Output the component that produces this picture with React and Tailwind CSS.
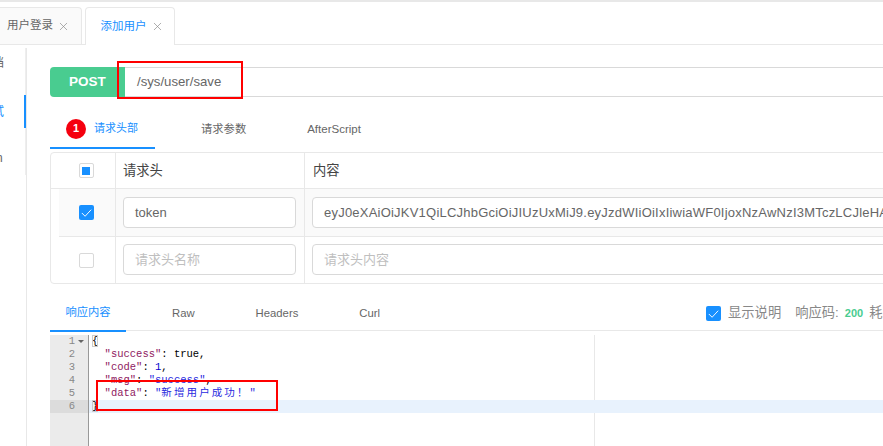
import { X } from "lucide-react";

const font = { fontFamily: '"Liberation Sans", "Noto Sans CJK SC", sans-serif' };

const Check = () => (
  <svg viewBox="0 0 16 16" className="h-[15px] w-[15px]" fill="none" stroke="#fff" strokeWidth="1">
    <path d="M3 8.5 L6.5 12 L13 5" />
  </svg>
);

function CheckedBox() {
  return (
    <span className="flex h-[15px] w-[15px] items-center justify-center rounded-[2px] bg-[#1890ff]">
      <Check />
    </span>
  );
}

function TextBox({ value, placeholder, className }) {
  return (
    <div className={`flex h-[31px] items-center overflow-hidden whitespace-nowrap rounded-[4px] border border-[#d9d9d9] bg-white px-[11px] text-[13px] ${value ? "text-[#666]" : "text-[#bfbfbf]"} ${className}`}>
      {value || placeholder}
    </div>
  );
}

const code = [
  [<span key="a" className="outline outline-1 -outline-offset-1 outline-[#ccc]">{"{"}</span>],
  [<span key="a" className="text-[#90205f]">{'  "success"'}</span>, <span key="b">: true,</span>],
  [<span key="a" className="text-[#90205f]">{'  "code"'}</span>, <span key="b">: </span>, <span key="c" className="text-[#0000cd]">1</span>, <span key="d">,</span>],
  [<span key="a" className="text-[#90205f]">{'  "msg"'}</span>, <span key="b">: </span>, <span key="c" className="text-[#2a2ae0]">"success"</span>, <span key="d">,</span>],
  [
    <span key="a" className="text-[#90205f]">{'  "data"'}</span>,
    <span key="b">: </span>,
    <span key="c" className="text-[#2a2ae0]">"<span className="tracking-[2.1px]">新增用户成功！</span>"</span>,
  ],
  [<span key="a" className="outline outline-1 -outline-offset-1 outline-[#ccc]">{"}"}</span>],
];

export default function App() {
  return (
    <div style={font} className="relative h-[446px] w-[883px] overflow-hidden bg-white">
      <div className="h-[2px] bg-[#e8e8e8]" />

      {/* tabs */}
      <div className="flex h-[43px] items-end gap-[3px] border-b border-[#e8e8e8] pt-[5px]">
        <div className="flex h-[37px] w-[82px] items-center justify-end gap-[4px] rounded-tr-[4px] border-t border-r border-[#e8e8e8] bg-[#fafafa] pr-[11px] text-[11.5px] text-[#666]">
          用户登录 <X size={13} strokeWidth={1.25} className="text-[#888]" />
        </div>
        <div className="-mb-px flex h-[38px] w-[90px] items-center justify-center gap-[4px] rounded-t-[4px] border border-b-0 border-[#e8e8e8] bg-white pl-[4px] text-[11.5px] text-[#1890ff]">
          添加用户 <X size={13} strokeWidth={1.25} className="text-[#888]" />
        </div>
      </div>

      <div className="flex">
        {/* side menu */}
        <div className="relative mt-[3px] h-[398px] w-[27px] shrink-0 border-r border-[#e8e8e8] text-[12px]">
          <div className="absolute top-[6px] -left-[8px] text-[#666]">档</div>
          <div className="absolute top-[55px] -left-[8px] text-[#1890ff]">试</div>
          <div className="absolute top-[101px] -left-[4px] text-[#666]">n</div>
          <div className="absolute top-0 right-0 h-[127px] w-px bg-[#eee]" />
          <div className="absolute top-[47px] right-0 h-[33px] w-[2px] bg-[#1890ff]" />
        </div>

        <div className="min-w-0 flex-1 pl-[23px]">
          {/* url bar */}
          <div className="mt-[22px] flex h-[30px] w-[900px]">
            <div className="flex w-[75px] items-center justify-center rounded-l-[4px] bg-[#49cc90] text-[13.5px] font-bold text-white">POST</div>
            <div className="flex flex-1 items-center border-y border-[#d9d9d9] pl-[12px] text-[13.2px] text-[#666]">/sys/user/save</div>
          </div>

          {/* request tabs */}
          <div className="mt-[13px] flex h-[39px] w-[900px] items-center text-[11px] text-[#666]">
            <div className="flex h-[39px] w-[105px] items-center justify-center gap-[8px] border-b-2 border-[#1890ff] pr-[1px] text-[#1890ff]">
              <span className="flex h-[20px] w-[20px] items-center justify-center rounded-full bg-[#f5000f] text-[11px] font-bold text-white">1</span>
              请求头部
            </div>
            <div className="ml-[46px] text-[11.3px]">请求参数</div>
            <div className="ml-[61px] text-[11.5px]">AfterScript</div>
          </div>

          {/* header table */}
          <div className="mt-[3px] w-[900px] rounded-[4px] border border-[#e8e8e8]">
            <div className="flex h-[36px] border-b border-[#e8e8e8] text-[13.3px] text-[#444]">
              <div className="flex w-[65px] shrink-0 items-center justify-center border-r border-[#e8e8e8] pl-[6px]">
                <span className="flex h-[15px] w-[15px] items-center justify-center rounded-[2px] border border-[#d9d9d9]">
                  <span className="h-[8px] w-[8px] bg-[#1890ff]" />
                </span>
              </div>
              <div className="flex w-[189px] shrink-0 items-center border-r border-[#e8e8e8] pl-[7px]">请求头</div>
              <div className="flex items-center pl-[8px]">内容</div>
            </div>
            <div className="ml-[8px] flex h-[48px] border-b border-[#e8e8e8] bg-[#fafafa]">
              <div className="flex w-[57px] shrink-0 items-center justify-center border-r border-[#e8e8e8] pr-[2px]">
                <CheckedBox />
              </div>
              <div className="flex w-[189px] shrink-0 items-center border-r border-[#e8e8e8] pl-[7px]">
                <TextBox value="token" className="w-[173px]" />
              </div>
              <div className="flex min-w-0 flex-1 items-center pl-[7px]">
                <TextBox value="eyJ0eXAiOiJKV1QiLCJhbGciOiJIUzUxMiJ9.eyJzdWIiOiIxIiwiaWF0IjoxNzAwNzI3MTczLCJleHAiOjE3MDA4MTM1NzN9" className="w-[640px] shrink-0 tracking-[0.22px]" />
              </div>
            </div>
            <div className="flex h-[46px]">
              <div className="flex w-[65px] shrink-0 items-center justify-center border-r border-[#e8e8e8] pl-[6px]">
                <span className="h-[15px] w-[15px] rounded-[2px] border border-[#d9d9d9]" />
              </div>
              <div className="flex w-[189px] shrink-0 items-start border-r border-[#e8e8e8] pt-[7px] pl-[7px]">
                <TextBox placeholder="请求头名称" className="w-[173px]" />
              </div>
              <div className="flex min-w-0 flex-1 items-start pt-[7px] pl-[7px]">
                <TextBox placeholder="请求头内容" className="w-[640px] shrink-0" />
              </div>
            </div>
          </div>

          {/* response tabs */}
          <div className="mt-[11px] flex h-[36px] w-[900px] items-center border-b border-[#e8e8e8] pt-[1px] text-[11.3px] text-[#666]">
            <div className="-mb-px flex h-[36px] w-[76px] items-center justify-center border-b-2 border-[#1890ff] text-[#1890ff]">响应内容</div>
            <div className="ml-[46px]">Raw</div>
            <div className="ml-[61px]">Headers</div>
            <div className="ml-[61px]">Curl</div>
            <div className="absolute left-[706px] flex items-center whitespace-nowrap text-[13.3px] text-[#888]">
              <CheckedBox />
              <span className="ml-[7px]">显示说明</span>
              <span className="ml-[14px]">响应码:</span>
              <span className="ml-[6px] text-[11px] font-bold text-[#49cc90]">200</span>
              <span className="ml-[6px]">耗时</span>
            </div>
          </div>

          {/* response editor */}
          <div className="mt-[4px] flex h-[111px] w-[900px] font-['Liberation_Mono','Noto_Sans_CJK_SC',monospace] text-[10.5px] leading-[13px]">
            <div className="w-[39px] shrink-0 border-r border-[#999] bg-[#ebebeb] text-[#888]">
              {code.map((_, i) => (
                <div key={i} className={`relative h-[13px] pr-[13px] text-right ${i === 5 ? "bg-[#dcdcdc]" : ""}`}>
                  {i + 1}
                  {i === 0 && <span className="absolute top-[5px] right-[4px] h-0 w-0 border-x-[3px] border-t-[3px] border-x-transparent border-t-[#666]" />}
                </div>
              ))}
            </div>
            <div className="relative flex-1 text-black">
              <div className="absolute top-0 bottom-0 left-[505px] w-px bg-[#e8e8e8]" />
              {code.map((line, i) => (
                <div key={i} className={`h-[13px] whitespace-pre pl-[3px] ${i === 5 ? "relative bg-[#e8f2fd]" : ""}`}>
                  {line}
                </div>
              ))}
            </div>
          </div>
        </div>
      </div>

      {/* red annotation boxes */}
      <div className="absolute top-[61px] left-[117px] h-[38px] w-[126px] border-[2.5px] border-[#f00]" />
      <div className="absolute top-[380px] left-[96px] h-[31px] w-[182px] border-[2.5px] border-[#f00]" />
    </div>
  );
}
